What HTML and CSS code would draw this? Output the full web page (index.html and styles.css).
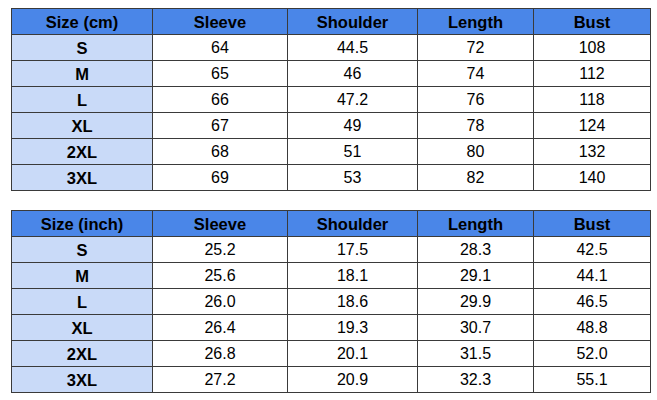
FILE: index.html
```html
<!DOCTYPE html>
<html>
<head>
<meta charset="utf-8">
<link rel="stylesheet" href="styles.css">
</head>
<body>
<div class="page">
<table class="size-table">
  <colgroup><col class="c1"><col class="c2"><col class="c3"><col class="c4"><col class="c5"></colgroup>
  <thead>
    <tr><th>Size (cm)</th><th>Sleeve</th><th>Shoulder</th><th>Length</th><th>Bust</th></tr>
  </thead>
  <tbody>
    <tr><td class="size">S</td><td>64</td><td>44.5</td><td>72</td><td>108</td></tr>
    <tr><td class="size">M</td><td>65</td><td>46</td><td>74</td><td>112</td></tr>
    <tr><td class="size">L</td><td>66</td><td>47.2</td><td>76</td><td>118</td></tr>
    <tr><td class="size">XL</td><td>67</td><td>49</td><td>78</td><td>124</td></tr>
    <tr><td class="size">2XL</td><td>68</td><td>51</td><td>80</td><td>132</td></tr>
    <tr><td class="size">3XL</td><td>69</td><td>53</td><td>82</td><td>140</td></tr>
  </tbody>
</table>
<table class="size-table">
  <colgroup><col class="c1"><col class="c2"><col class="c3"><col class="c4"><col class="c5"></colgroup>
  <thead>
    <tr><th>Size (inch)</th><th>Sleeve</th><th>Shoulder</th><th>Length</th><th>Bust</th></tr>
  </thead>
  <tbody>
    <tr><td class="size">S</td><td>25.2</td><td>17.5</td><td>28.3</td><td>42.5</td></tr>
    <tr><td class="size">M</td><td>25.6</td><td>18.1</td><td>29.1</td><td>44.1</td></tr>
    <tr><td class="size">L</td><td>26.0</td><td>18.6</td><td>29.9</td><td>46.5</td></tr>
    <tr><td class="size">XL</td><td>26.4</td><td>19.3</td><td>30.7</td><td>48.8</td></tr>
    <tr><td class="size">2XL</td><td>26.8</td><td>20.1</td><td>31.5</td><td>52.0</td></tr>
    <tr><td class="size">3XL</td><td>27.2</td><td>20.9</td><td>32.3</td><td>55.1</td></tr>
  </tbody>
</table>
</div>
</body>
</html>
```
FILE: styles.css
```css
html, body {
  margin: 0;
  padding: 0;
  background: #ffffff;
}
body {
  font-family: "Liberation Sans", Arial, sans-serif;
  color: #000;
}
.page {
  padding: 8px 0 0 11px;
  display: flex;
  flex-direction: column;
  gap: 19px;
}
.size-table {
  border-collapse: collapse;
  table-layout: fixed;
  width: 640px;
}
.c1 { width: 141px; }
.c2 { width: 135px; }
.c3 { width: 130px; }
.c4 { width: 116px; }
.c5 { width: 117px; }
.size-table th,
.size-table td {
  border: 1px solid #3a3a3a;
  height: 26px;
  padding: 0;
  text-align: center;
  vertical-align: middle;
  line-height: 18px;
  box-sizing: border-box;
}
.size-table th {
  background: #4a86e8;
  font-weight: bold;
  font-size: 16.5px;
}
.size-table td {
  font-size: 16px;
}
.size-table td.size {
  background: #c9daf8;
  font-weight: bold;
  font-size: 16.5px;
}
```
